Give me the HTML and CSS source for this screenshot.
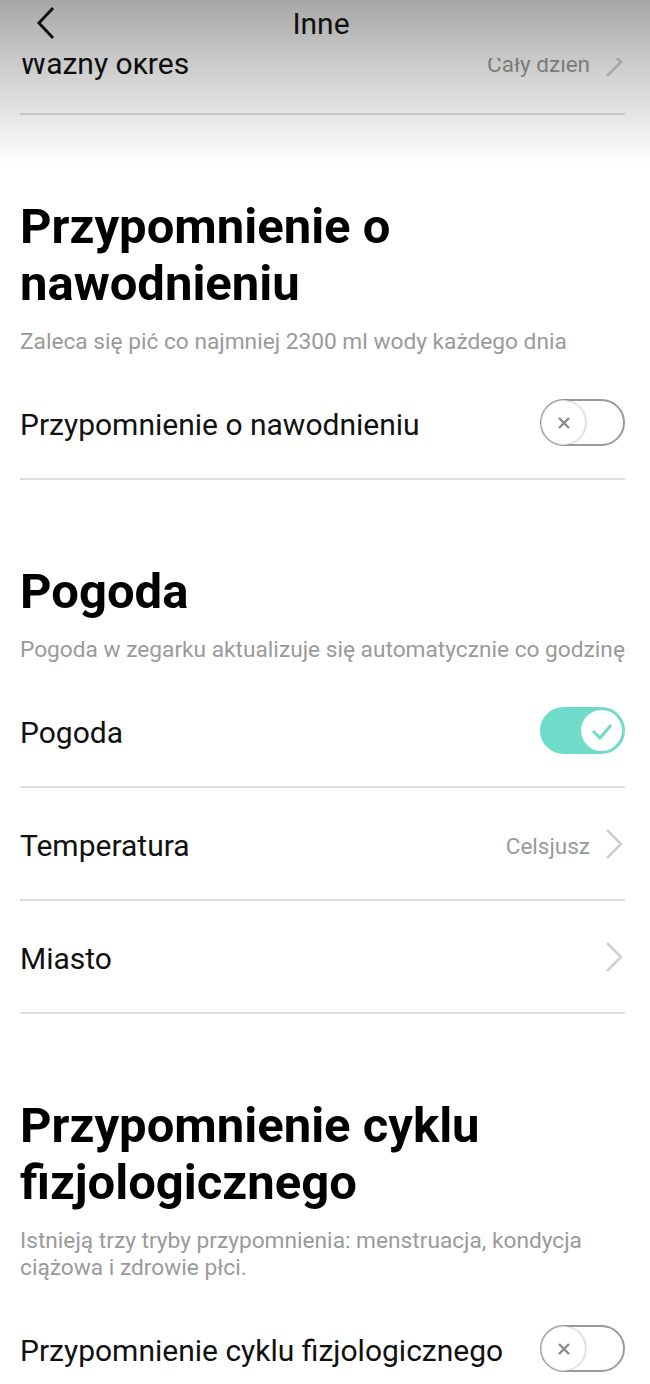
FILE: index.html
```html
<!DOCTYPE html>
<html lang="pl">
<head>
<meta charset="utf-8">
<title>Inne</title>
<link rel="stylesheet" href="styles.css">
</head>
<body>
<div class="screen">
  <header class="topbar">
    <svg class="back" width="22" height="34" viewBox="0 0 22 34"><path d="M18 2 L4 17 L18 32" fill="none" stroke="#111" stroke-width="3"/></svg>
    <span class="title">Inne</span>
  </header>

  <main class="content">
    <div class="row first">
      <span class="label">Ważny okres</span>
      <span class="value">Cały dzień</span>
      <svg class="chev" width="20" height="32" viewBox="0 0 20 32"><path d="M3 2 L17 16 L3 30" fill="none" stroke="#cfcfcf" stroke-width="2.5"/></svg>
    </div>

    <section class="section">
      <h2 class="heading">Przypomnienie o nawodnieniu</h2>
      <p class="desc">Zaleca się pić co najmniej 2300 ml wody każdego dnia</p>
      <div class="row">
        <span class="label">Przypomnienie o nawodnieniu</span>
        <span class="toggle off"><span class="knob"><svg width="16" height="16" viewBox="0 0 16 16"><path d="M3 3 L13 13 M13 3 L3 13" stroke="#8a8a8a" stroke-width="2.4"/></svg></span></span>
      </div>
    </section>

    <section class="section">
      <h2 class="heading">Pogoda</h2>
      <p class="desc">Pogoda w zegarku aktualizuje się automatycznie co godzinę</p>
      <div class="row">
        <span class="label">Pogoda</span>
        <span class="toggle on"><span class="knob"><svg width="24" height="20" viewBox="0 0 24 20"><path d="M3 10 L10 17 L21 4" fill="none" stroke="#6fdcca" stroke-width="3"/></svg></span></span>
      </div>
      <div class="row">
        <span class="label">Temperatura</span>
        <span class="value">Celsjusz</span>
        <svg class="chev" width="20" height="32" viewBox="0 0 20 32"><path d="M3 2 L17 16 L3 30" fill="none" stroke="#cfcfcf" stroke-width="2.5"/></svg>
      </div>
      <div class="row">
        <span class="label">Miasto</span>
        <svg class="chev" width="20" height="32" viewBox="0 0 20 32"><path d="M3 2 L17 16 L3 30" fill="none" stroke="#cfcfcf" stroke-width="2.5"/></svg>
      </div>
    </section>

    <section class="section">
      <h2 class="heading">Przypomnienie cyklu fizjologicznego</h2>
      <p class="desc">Istnieją trzy tryby przypomnienia: menstruacja, kondycja ciążowa i zdrowie płci.</p>
      <div class="row">
        <span class="label">Przypomnienie cyklu fizjologicznego</span>
        <span class="toggle off"><span class="knob"><svg width="16" height="16" viewBox="0 0 16 16"><path d="M3 3 L13 13 M13 3 L3 13" stroke="#8a8a8a" stroke-width="2.4"/></svg></span></span>
      </div>
    </section>
  </main>
</div>
</body>
</html>
```

FILE: styles.css
```css
* { box-sizing: border-box; }
html, body { margin: 0; padding: 0; background: #fff; }
body {
  font-family: Roboto, "Noto Sans", "Liberation Sans", sans-serif;
  color: #111;
}
.screen {
  position: relative;
  width: 650px;
  height: 1384px;
  overflow: hidden;
}
.topbar {
  position: absolute;
  left: 0; top: 0;
  width: 100%;
  height: 165px;
  z-index: 2;
  background-image:
    linear-gradient(to bottom, rgba(0,0,0,0.35) 0, rgba(0,0,0,0.22) 55px, rgba(0,0,0,0.1) 115px, rgba(0,0,0,0) 165px),
    linear-gradient(to bottom, #fff 58px, rgba(255,255,255,0) 58px);
  pointer-events: none;
}
.back {
  position: absolute;
  left: 35px;
  top: 6px;
}
.title {
  position: absolute;
  left: 0; right: 0;
  top: 5px;
  text-align: center;
  font-size: 30px;
  line-height: 38px;
  color: #111;
  padding-right: 8px;
}
.content {
  padding: 0 25px 0 20px;
}
.row {
  height: 113px;
  display: flex;
  align-items: center;
  border-bottom: 2px solid #dedede;
}
.row.first {
  height: 115px;
  padding-top: 10px;
}
.label {
  flex: 1;
  font-size: 30px;
  line-height: 36px;
  padding-top: 4px;
  color: #111;
}
.value {
  font-size: 22.5px;
  line-height: 30px;
  padding-top: 4px;
  color: #9a9a9a;
  margin-right: 14px;
}
.chev { display: block; margin-right: 1px; }
.section {
  padding-top: 83px;
}
.heading {
  margin: 0;
  font-size: 49px;
  line-height: 57px;
  font-weight: 700;
  color: #000;
}
.desc {
  margin: 16px 0 12px;
  font-size: 22.7px;
  line-height: 27px;
  color: #9a9a9a;
}
.toggle {
  width: 85px;
  height: 47px;
  border-radius: 24px;
  position: relative;
  display: block;
}
.toggle.off {
  border: 2px solid #9a9a9a;
}
.toggle.off .knob {
  position: absolute;
  left: -1px; top: -1px;
  width: 45px; height: 45px;
  border-radius: 50%;
  border: 1px solid #dcdcdc;
  background: #fff;
  box-shadow: 1px 0 2px rgba(0,0,0,0.12);
  display: flex;
  align-items: center;
  justify-content: center;
}
.toggle.on {
  background: #6fdcca;
}
.toggle.on .knob {
  position: absolute;
  right: 3px; top: 3px;
  width: 41px; height: 41px;
  border-radius: 50%;
  background: #fff;
  display: flex;
  align-items: center;
  justify-content: center;
}
```
